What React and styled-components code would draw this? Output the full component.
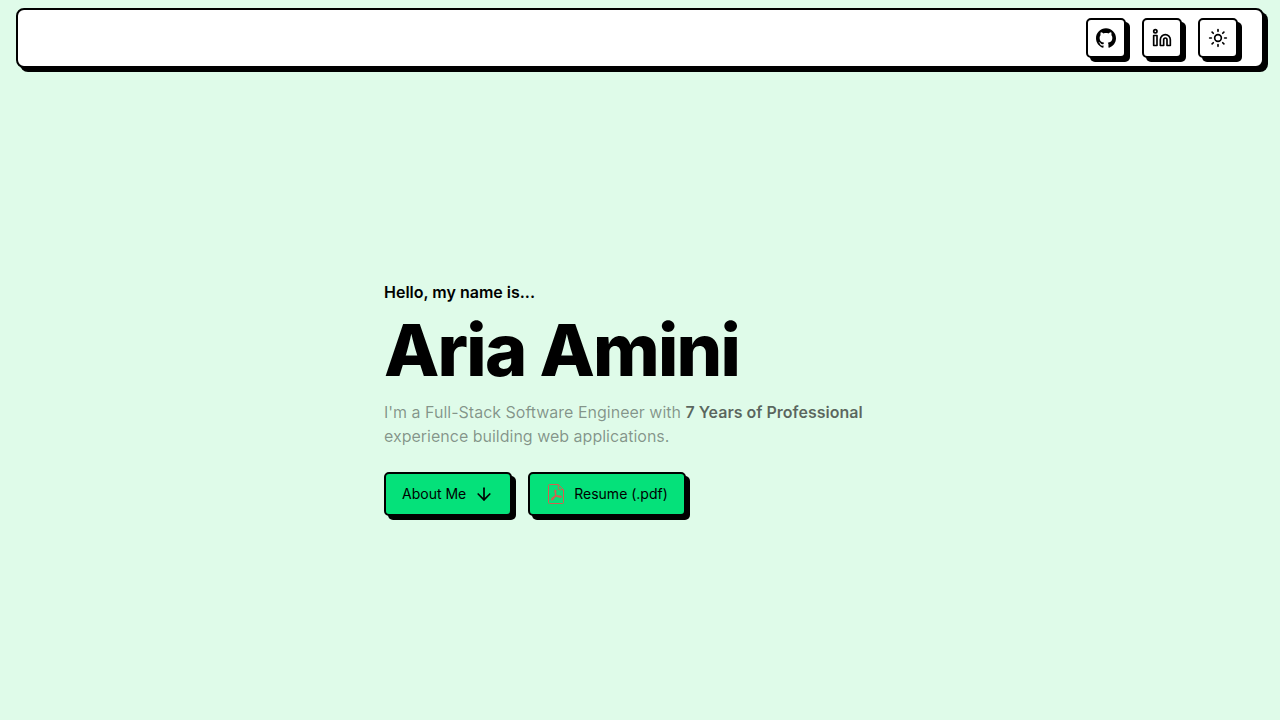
import React from "react";
import styled, { createGlobalStyle, css } from "styled-components";
import { ArrowDown, Linkedin, Sun } from "lucide-react";
import { SiGithub } from "react-icons/si";

const GlobalStyle = createGlobalStyle`
  *, *::before, *::after { box-sizing: border-box; }
  body {
    margin: 0;
    background: #dffbe9;
    color: #000;
    font-family: Inter, "Liberation Sans", sans-serif;
    font-size: 16px;
    line-height: 24px;
  }
`;

const Page = styled.div`
  min-height: 100vh;
  display: flex;
  flex-direction: column;
`;

const raised = css`
  border: 2px solid #000;
  box-shadow: 4px 4px 0 0 #000;
`;

const Header = styled.header`
  ${raised}
  margin: 8px 16px;
  padding: 8px 24px;
  border-radius: 8px;
  background: #fff;
`;

const Nav = styled.nav`
  display: flex;
  justify-content: flex-end;
  gap: 16px;
`;

const control = css`
  ${raised}
  display: inline-flex;
  align-items: center;
  justify-content: center;
  border-radius: 5px;
  color: #000;
  font: inherit;
  text-decoration: none;
  cursor: pointer;
`;

const iconControl = css`
  ${control}
  width: 40px;
  height: 40px;
  padding: 0;
  background: #fff;
`;

const IconLink = styled.a`
  ${iconControl}
`;

const IconButton = styled.button`
  ${iconControl}
`;

const Main = styled.main`
  flex: 1;
  display: flex;
  align-items: center;
  justify-content: center;
  padding: 0 16px;
`;

const Hero = styled.section`
  width: 100%;
  max-width: 512px;
`;

const Greeting = styled.p`
  margin: 0 0 10px;
  font-weight: 600;
`;

const Name = styled.h1`
  margin: 0 0 14px;
  font-size: 72px;
  line-height: 72px;
  font-weight: 800;
  letter-spacing: -0.025em;
`;

const Summary = styled.p`
  margin: 0 0 24px;
  color: rgba(0, 0, 0, 0.42);

  strong {
    color: rgba(0, 0, 0, 0.6);
    font-weight: 600;
  }
`;

const Actions = styled.div`
  display: flex;
  flex-wrap: wrap;
  gap: 16px;
`;

const ActionLink = styled.a`
  ${control}
  height: 44px;
  padding: 0 16px;
  gap: 8px;
  background: #05e17a;
  font-size: 14px;
  font-weight: 400;
`;

function PdfIcon() {
  return (
    <svg width="20" height="20" viewBox="0 0 20 20" fill="none" stroke="#d4604f" strokeLinejoin="round" aria-hidden="true">
      <path d="M3.500 .5h8.800l5.200 5.200v12.800a1 1 0 0 1-1 1h-13a1 1 0 0 1-1-1v-17a1 1 0 0 1 1-1z" />
      <path d="M12.300 .7v4a1 1 0 0 0 1 1h4" />
      <path
        d="M9.300 6.200c-1 .2.2 4.300 1.200 5.300 1.200 1.200 3.600 2 4.500 1.500 1-.8-1.600-1.400-4.300-.9-2.300.4-5 1.900-5.200 3.200 0 1.700 2.100-.2 3.300-2.900.9-2 1.500-6.300.5-6.200z"
        strokeWidth="1.200"
      />
    </svg>
  );
}

export default function App() {
  return (
    <>
      <GlobalStyle />
      <Page>
        <Header>
          <Nav aria-label="Profile links">
            <IconLink href="#github" aria-label="GitHub">
              <SiGithub size={20} />
            </IconLink>
            <IconLink href="#linkedin" aria-label="LinkedIn">
              <Linkedin size={20} />
            </IconLink>
            <IconButton type="button" aria-label="Toggle theme">
              <Sun size={20} />
            </IconButton>
          </Nav>
        </Header>
        <Main>
          <Hero>
            <Greeting>Hello, my name is...</Greeting>
            <Name>Aria Amini</Name>
            <Summary>
              I'm a Full-Stack Software Engineer with <strong>7 Years of Professional</strong>{" "}
              experience building web applications.
            </Summary>
            <Actions>
              <ActionLink href="#about">
                About Me
                <ArrowDown size={20} />
              </ActionLink>
              <ActionLink href="#resume">
                <PdfIcon />
                Resume (.pdf)
              </ActionLink>
            </Actions>
          </Hero>
        </Main>
      </Page>
    </>
  );
}
